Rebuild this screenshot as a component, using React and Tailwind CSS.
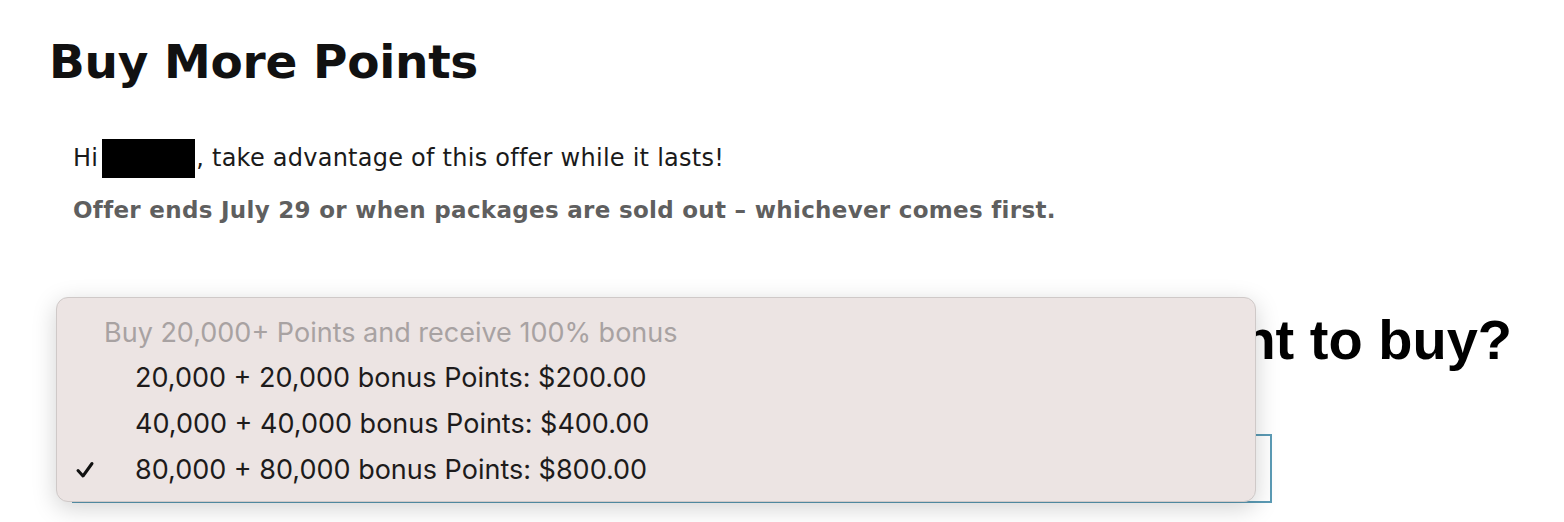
import { useState } from "react";

const opciones = [
  { id: 1, label: "20,000 + 20,000 bonus Points: $200.00" },
  { id: 2, label: "40,000 + 40,000 bonus Points: $400.00" },
  { id: 3, label: "80,000 + 80,000 bonus Points: $800.00" },
];

export default function App() {
  const [seleccion, setSeleccion] = useState(3);

  return (
    <div className="relative w-[1564px] h-[522px] overflow-hidden bg-white px-[48px] pt-[30px]">
      <h1 className="pl-[1px] text-[47px] leading-[64px] font-bold text-[#111] font-['DejaVu_Sans',sans-serif] tracking-[-0.3px]">
        Buy More Points
      </h1>

      <div className="pl-[25px] pt-[44px] font-['DejaVu_Sans',sans-serif]">
        <p className="flex items-center text-[24px] leading-[40px] text-[#1a1a1a] tracking-[0.25px]">
          Hi
          <span className="inline-block w-[93px] h-[39px] bg-black ml-[4px] mr-[1px]" />
          , take advantage of this offer while it lasts!
        </p>
        <p className="mt-[16px] text-[23px] leading-[32px] font-bold text-[#5f5f5f] tracking-[0.3px]">
          Offer ends July 29 or when packages are sold out – whichever comes first.
        </p>
      </div>

      <h2 className="mt-[82px] mr-[4px] text-right text-[56px] leading-[64px] font-bold text-black font-['Liberation_Sans',Arial,sans-serif]">
        How many Points do you want to buy?
      </h2>

      <div className="ml-[24px] mt-[62px] w-[1200px] h-[69px] border-2 border-[#5b9bb5]" />

      {/* menu desplegable abierto */}
      <div className="absolute left-[56px] top-[297px] w-[1200px] h-[205px] rounded-[12px] border border-[#cfc9c8] bg-[#ece4e3] shadow-[0_6px_24px_rgba(0,0,0,0.18)] pt-[17px] font-['Inter',sans-serif]">
        <div className="pl-[47px] text-[27px] leading-[36px] text-[#a8a2a2]">
          Buy 20,000+ Points and receive 100% bonus
        </div>
        <ul className="mt-[4px]">
          {opciones.map((op) => (
            <li
              key={op.id}
              onClick={() => setSeleccion(op.id)}
              className="relative pl-[78px] text-[27px] leading-[46px] text-[#1d1b1b] cursor-default"
            >
              {seleccion === op.id && (
                <svg
                  className="absolute left-[18px] top-[14px]"
                  width="20"
                  height="18"
                  viewBox="0 0 20 18"
                  fill="none"
                  stroke="#111"
                  strokeWidth="3"
                  strokeLinecap="round"
                  strokeLinejoin="round"
                >
                  <path d="M3 9.5 L8 15 L17 2.5" />
                </svg>
              )}
              {op.label}
            </li>
          ))}
        </ul>
      </div>
    </div>
  );
}
